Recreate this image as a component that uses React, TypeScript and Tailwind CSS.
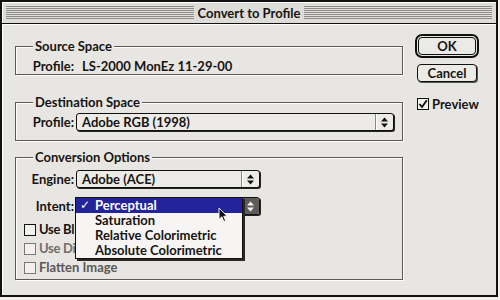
import React from "react";

const FONT = "font-['Lato','Open_Sans',sans-serif] font-bold text-[13px]";

function Arrows({ color = "#111" }: { color?: string }) {
  return (
    <svg width="7" height="11" viewBox="0 0 7 11">
      <polygon points="0,4.5 3.5,0.5 7,4.5" fill={color} />
      <polygon points="0,6.5 3.5,10.5 7,6.5" fill={color} />
    </svg>
  );
}

function Popup({ label, widthClass, arrowW }: { label: string; widthClass: string; arrowW: string }) {
  return (
    <div className={`flex h-[18px] ${widthClass} rounded-[3px] border border-[#111] bg-[#ecebe8] shadow-[1px_1px_0_#222]`}>
      <div className="flex-1 pl-[5px] leading-[16px]">{label}</div>
      <div className={`flex ${arrowW} items-center justify-center border-l border-[#8a8884] shadow-[inset_1px_0_0_#fff]`}>
        <Arrows />
      </div>
    </div>
  );
}

function CheckBox({ checked = false, disabled = false }: { checked?: boolean; disabled?: boolean }) {
  return (
    <div
      className={`flex h-[12px] w-[12px] shrink-0 items-center justify-center border ${
        disabled ? "border-[#7a7875]" : "border-[#111]"
      } bg-[#f2f1ef]`}
    >
      {checked && (
        <svg width="10" height="10" viewBox="0 0 10 10">
          <path d="M1.5 5 L4 8 L8.8 1.2" stroke="#111" strokeWidth="1.8" fill="none" />
        </svg>
      )}
    </div>
  );
}

function Group({ title, heightClass, children }: { title: string; heightClass: string; children: React.ReactNode }) {
  return (
    <div
      className={`flex ${heightClass} flex-col border border-[#5d5a56] shadow-[1px_1px_0_#fff,inset_1px_1px_0_#fff]`}
    >
      <div className="-mt-[9px] ml-[17px] w-fit bg-[#e8e6e3] px-[2px] leading-[16px]">{title}</div>
      {children}
    </div>
  );
}

export default function App() {
  return (
    <div className={`h-[300px] w-[500px] bg-[#f3f2f0] text-[#161412] ${FONT}`}>
      <div className="flex h-[297px] w-[498px] flex-col border-2 border-[#111] bg-[#e8e6e3]">
        {/* Title bar */}
        <div className="flex h-[22px] items-center gap-[4px] border-b border-[#111] bg-[#dedcd9] px-[4px] shadow-[inset_1px_1px_0_#fff]">
          <div className="h-[13px] flex-1 bg-[repeating-linear-gradient(to_bottom,#8c8a88_0px,#8c8a88_1px,#e4e2df_1px,#e4e2df_2px)]" />
          <div className="text-[13px] leading-[16px]">Convert to Profile</div>
          <div className="h-[13px] flex-1 bg-[repeating-linear-gradient(to_bottom,#8c8a88_0px,#8c8a88_1px,#e4e2df_1px,#e4e2df_2px)]" />
        </div>

        {/* Body */}
        <div className="flex flex-1 pl-[13px] shadow-[inset_1px_1px_0_#fff]">
          {/* Left column */}
          <div className="flex w-[388px] flex-col pt-[22px]">
            <Group title="Source Space" heightClass="h-[29px]">
              <div className="mt-[5px] flex leading-[14px]">
                <div className="w-[58px] text-right">Profile:</div>
                <div className="ml-[8px]">LS-2000 MonEz 11-29-00</div>
              </div>
            </Group>

            <div className="mt-[27px]">
              <Group title="Destination Space" heightClass="h-[39px]">
                <div className="mt-[3px] flex items-center">
                  <div className="w-[58px] text-right leading-[18px]">Profile:</div>
                  <div className="ml-[2px]">
                    <Popup label="Adobe RGB (1998)" widthClass="w-[318px]" arrowW="w-[18px]" />
                  </div>
                </div>
              </Group>
            </div>

            <div className="mt-[16px]">
              <Group title="Conversion Options" heightClass="h-[123px]">
                <div className="mt-[5px] flex items-center">
                  <div className="w-[58px] text-right leading-[18px]">Engine:</div>
                  <div className="ml-[2px]">
                    <Popup label="Adobe (ACE)" widthClass="w-[184px]" arrowW="w-[18px]" />
                  </div>
                </div>

                <div className="relative z-10 mt-[9px] flex items-center">
                  <div className="w-[58px] text-right leading-[18px]">Intent:</div>
                  <div className="relative ml-[2px]">
                    <div className="flex h-[18px] w-[184px] rounded-[3px] border border-[#111] bg-[#ecebe8] shadow-[1px_1px_0_#222]">
                      <div className="flex-1" />
                      <div className="flex w-[17px] items-center justify-center rounded-r-[2px] bg-[#5e5c5a]">
                        <Arrows color="#f4f4f4" />
                      </div>
                    </div>
                    {/* Open menu */}
                    <div className="absolute left-[-1px] top-0 w-[168px] border border-[#111] bg-[#f6f5f3] shadow-[2px_2px_0_#2a2826]">
                      <div className="flex h-[15px] items-center bg-[#23239c] leading-[15px] text-white">
                        <div className="w-[19px] pl-[4px] font-['DejaVu_Sans',sans-serif] text-[12px] font-normal">✓</div>
                        <div>Perceptual</div>
                      </div>
                      <div className="h-[15px] pl-[19px] leading-[15px]">Saturation</div>
                      <div className="h-[15px] pl-[19px] leading-[15px]">Relative Colorimetric</div>
                      <div className="h-[15px] pl-[19px] leading-[15px]">Absolute Colorimetric</div>
                    </div>
                    {/* Cursor */}
                    <svg className="absolute left-[142px] top-[10px]" width="10" height="16" viewBox="0 0 10 16">
                      <path d="M1 1 L1 12.5 L3.8 9.8 L5.8 14.5 L7.6 13.7 L5.7 9.2 L9.2 9.2 Z" fill="#111" stroke="#fff" strokeWidth="0.9" />
                    </svg>
                  </div>
                </div>

                <div className="mt-[5px] flex flex-col pl-[8px]">
                  <div className="flex h-[19px] items-center gap-[3px]">
                    <CheckBox />
                    <div className="whitespace-nowrap tracking-[-0.3px]">Use Bl</div>
                  </div>
                  <div className="flex h-[19px] items-center gap-[3px] text-[#6f6d6a]">
                    <CheckBox disabled />
                    <div className="whitespace-nowrap tracking-[-0.3px]">Use Di</div>
                  </div>
                  <div className="flex h-[19px] items-center gap-[3px] text-[#5a5855]">
                    <CheckBox disabled />
                    <div>Flatten Image</div>
                  </div>
                </div>
              </Group>
            </div>
          </div>

          {/* Right column */}
          <div className="ml-[12px] flex flex-col pt-[10px]">
            <div className="w-[64px] rounded-[7px] border-[2px] border-[#111] p-px">
              <div className="flex h-[18px] items-center justify-center rounded-[4px] border border-[#111] bg-[#eceae7] leading-[16px]">
                OK
              </div>
            </div>
            <div className="ml-[2px] mt-[6px] flex h-[18px] w-[60px] items-center justify-center rounded-[4px] border border-[#111] bg-[#eceae7] leading-[16px] shadow-[1px_1px_0_#555]">
              Cancel
            </div>
            <div className="ml-[2px] mt-[14px] flex items-center gap-[3px]">
              <CheckBox checked />
              <div className="text-[13px] leading-[16px]">Preview</div>
            </div>
          </div>
        </div>
      </div>
    </div>
  );
}
